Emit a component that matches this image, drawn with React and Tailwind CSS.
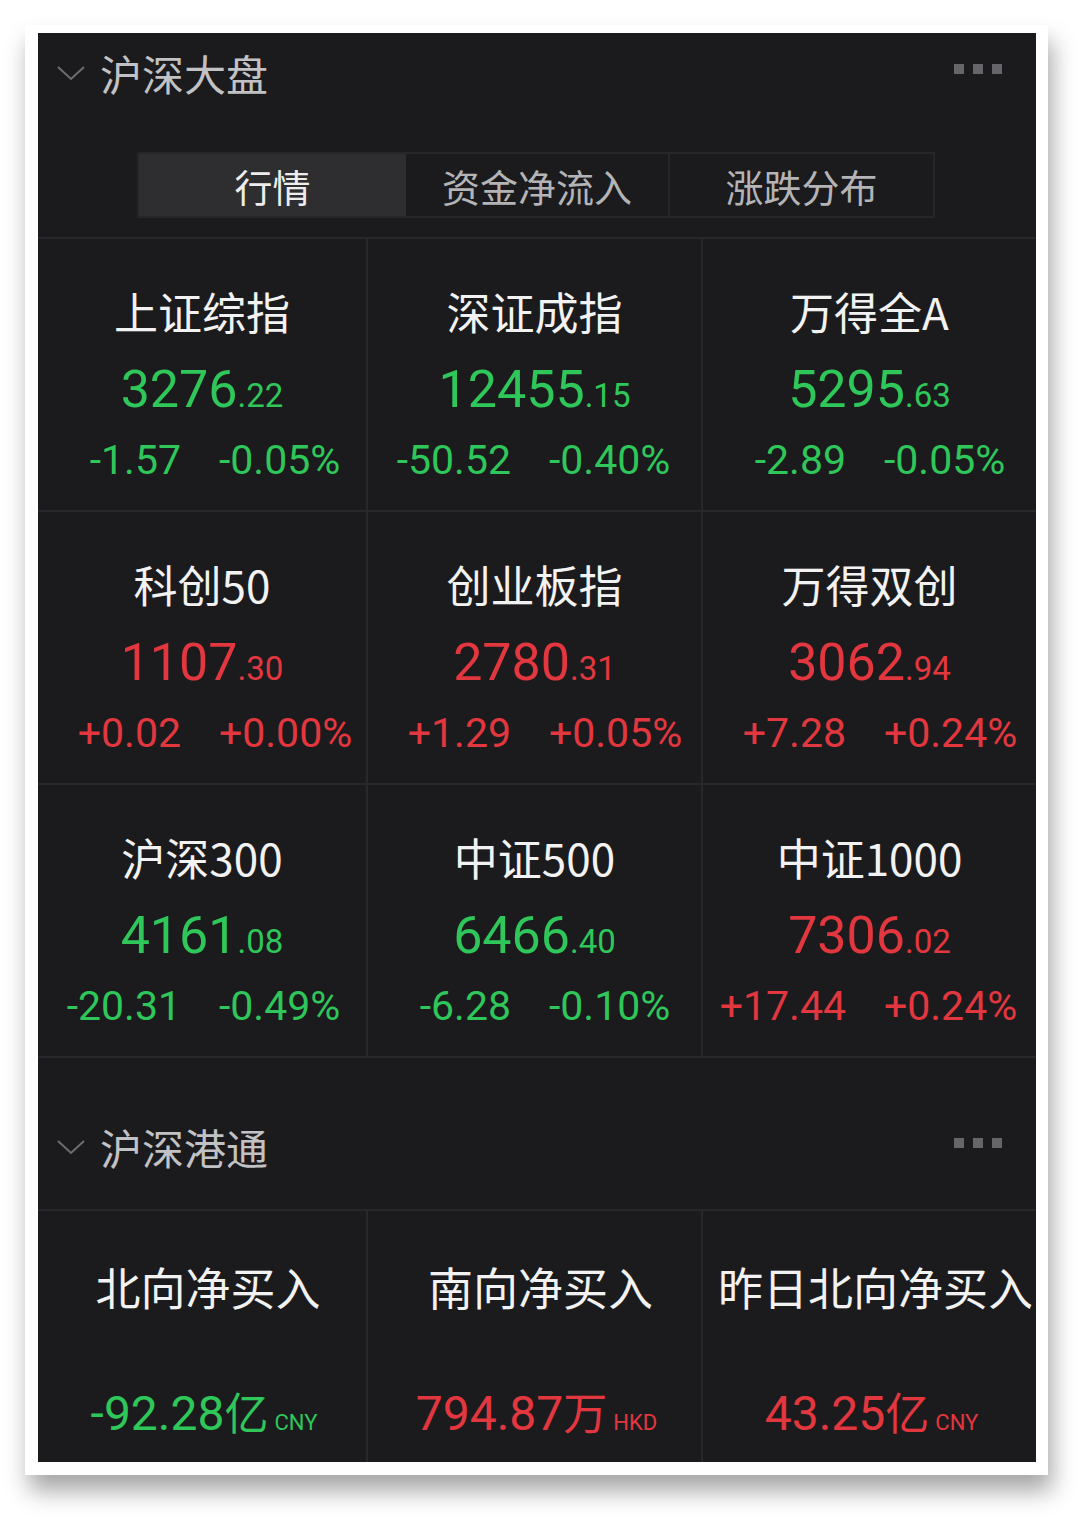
import React from "react";

const GREEN = "text-[#2fc65a]";
const RED = "text-[#e3373f]";

const indices = [
  { name: "上证综指", int: "3276", dec: ".22", chg: "-1.57", pct: "-0.05%", up: false },
  { name: "深证成指", int: "12455", dec: ".15", chg: "-50.52", pct: "-0.40%", up: false },
  { name: "万得全A", int: "5295", dec: ".63", chg: "-2.89", pct: "-0.05%", up: false },
  { name: "科创50", int: "1107", dec: ".30", chg: "+0.02", pct: "+0.00%", up: true },
  { name: "创业板指", int: "2780", dec: ".31", chg: "+1.29", pct: "+0.05%", up: true },
  { name: "万得双创", int: "3062", dec: ".94", chg: "+7.28", pct: "+0.24%", up: true },
  { name: "沪深300", int: "4161", dec: ".08", chg: "-20.31", pct: "-0.49%", up: false },
  { name: "中证500", int: "6466", dec: ".40", chg: "-6.28", pct: "-0.10%", up: false },
  { name: "中证1000", int: "7306", dec: ".02", chg: "+17.44", pct: "+0.24%", up: true },
];

const flows = [
  { name: "北向净买入", value: "-92.28", unit: "亿", cur: "CNY", up: false },
  { name: "南向净买入", value: "794.87", unit: "万", cur: "HKD", up: true },
  { name: "昨日北向净买入", value: "43.25", unit: "亿", cur: "CNY", up: true },
];

const cjk = { fontFamily: '"Noto Sans CJK SC", "Noto Sans", sans-serif' };
const num = { fontFamily: 'Roboto, "Noto Sans CJK SC", sans-serif' };

function SectionHeader({ title, className }) {
  return (
    <div className={`flex items-center pl-[18px] pr-[34px] ${className}`}>
      <svg width="30" height="20" viewBox="0 0 30 20" className="shrink-0">
        <path d="M2 4 L15 16 L28 4" fill="none" stroke="#6e6e72" strokeWidth="2" />
      </svg>
      <span className="ml-[14px] text-[42px] leading-none text-[#c2c2c4]" style={cjk}>
        {title}
      </span>
      <div className="ml-auto flex gap-[9px] -mt-[8px]">
        <span className="w-[10px] h-[10px] bg-[#66666a]" />
        <span className="w-[10px] h-[10px] bg-[#66666a]" />
        <span className="w-[10px] h-[10px] bg-[#66666a]" />
      </div>
    </div>
  );
}

function IndexCell({ item, col }) {
  const color = item.up ? RED : GREEN;
  return (
    <div
      className={`h-[273px] flex flex-col items-center pt-[48px] border-b-[2px] border-[#28282c] ${
        col < 2 ? "border-r-[2px]" : ""
      }`}
    >
      <div className="text-[44px] leading-[48px] text-[#f2f2f2]" style={cjk}>
        {item.name}
      </div>
      <div className={`mt-[27px] leading-[56px] ${color}`} style={num}>
        <span className="text-[52px]">{item.int}</span>
        <span className="text-[33px]">{item.dec}</span>
      </div>
      <div className={`mt-[6px] w-full flex text-[41px] leading-[48px] ${color}`} style={num}>
        <span className="w-[143px] text-right">{item.chg}</span>
        <span className="ml-[38px]">{item.pct}</span>
      </div>
    </div>
  );
}

function FlowCell({ item, col }) {
  const color = item.up ? RED : GREEN;
  return (
    <div
      className={`h-[254px] flex flex-col items-center pt-[52px] ${
        col < 2 ? "border-r-[2px] border-[#28282c]" : ""
      }`}
    >
      <div className="pl-[12px] text-[45px] leading-[48px] text-[#f2f2f2] whitespace-nowrap" style={cjk}>
        {item.name}
      </div>
      <div className={`mt-[72px] pl-[4px] flex items-baseline leading-[56px] ${color}`} style={num}>
        <span className="text-[48px]">{item.value}</span>
        <span className="text-[44px]" style={cjk}>
          {item.unit}
        </span>
        <span className="ml-[6px] text-[22px]">{item.cur}</span>
      </div>
    </div>
  );
}

export default function App() {
  return (
    <div className="w-[1080px] h-[1522px] bg-white overflow-hidden">
      <div className="ml-[25px] mt-[25px] w-[1023px] h-[1450px] bg-white pt-[8px] pl-[13px] pr-[12px] pb-[13px] shadow-[4px_16px_22px_rgba(0,0,0,0.35)]">
        <div className="w-[998px] h-[1429px] bg-[#1b1b1e] overflow-hidden">
          <SectionHeader title="沪深大盘" className="h-[80px]" />

          <div className="mt-[39px] ml-[99px] w-[798px] h-[66px] flex border-[2px] border-[#262629]" style={cjk}>
            <div className="w-[267px] flex items-center justify-center bg-[#2e2e31] text-[38px] text-[#ededed]">
              行情
            </div>
            <div className="w-[264px] flex items-center justify-center border-r-[2px] border-[#262629] text-[38px] text-[#b4b4b6]">
              资金净流入
            </div>
            <div className="flex-1 flex items-center justify-center text-[38px] text-[#b4b4b6]">
              涨跌分布
            </div>
          </div>

          <div className="mt-[19px] grid grid-cols-[330px_335px_333px] border-t-[2px] border-[#28282c]">
            {indices.map((item, i) => (
              <IndexCell key={item.name} item={item} col={i % 3} />
            ))}
          </div>

          <SectionHeader title="沪深港通" className="h-[151px] pt-[26px]" />

          <div className="grid grid-cols-[330px_335px_333px] border-t-[2px] border-[#28282c]">
            {flows.map((item, i) => (
              <FlowCell key={item.name} item={item} col={i} />
            ))}
          </div>
        </div>
      </div>
    </div>
  );
}
